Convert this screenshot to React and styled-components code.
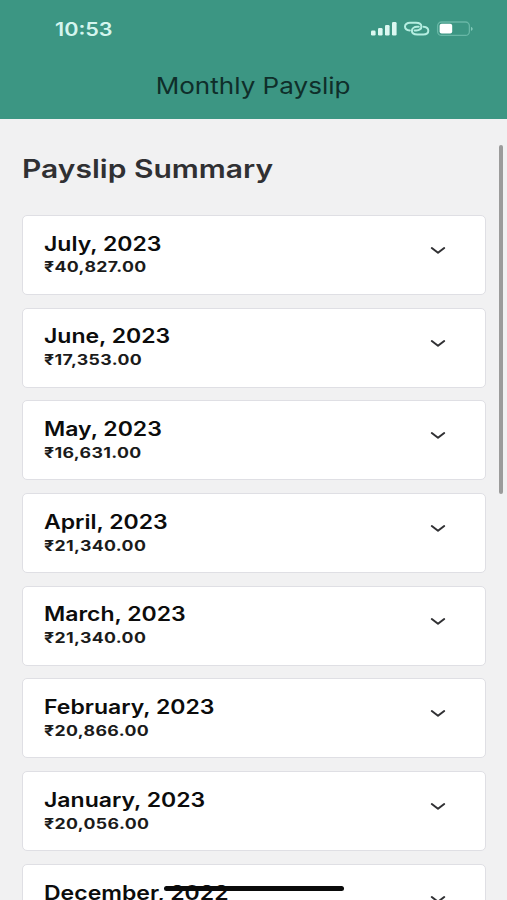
import styled, { createGlobalStyle } from "styled-components"

const payslips = [
  { month: "July, 2023", amount: "₹40,827.00" },
  { month: "June, 2023", amount: "₹17,353.00" },
  { month: "May, 2023", amount: "₹16,631.00" },
  { month: "April, 2023", amount: "₹21,340.00" },
  { month: "March, 2023", amount: "₹21,340.00" },
  { month: "February, 2023", amount: "₹20,866.00" },
  { month: "January, 2023", amount: "₹20,056.00" },
  { month: "December, 2022" }
]

const StatusIcons = () => (
  <svg width="103" height="20" viewBox="0 0 103 20" fill="none">
    <g fill="#dcf8f1">
      <rect x="1" y="10.6" width="4.6" height="5" rx="1.3" />
      <rect x="8" y="8" width="4.6" height="7.6" rx="1.3" />
      <rect x="15" y="5" width="4.6" height="10.6" rx="1.3" />
      <rect x="22" y="2" width="4.6" height="13.6" rx="1.3" />
    </g>
    <g stroke="#b5eee1" strokeWidth="2" strokeLinecap="round">
      <path d="M39.8 10.5C36.8 10.2 35 8.5 35 6.5C35 4.4 37 2.8 40 2.8H46C49.5 2.8 51.4 4.6 51.4 6.6C51.4 8.8 49.3 10.4 46.2 10.4H44.6" />
      <path d="M53.6 6.8C56.5 7.1 58.3 8.7 58.3 10.7C58.3 12.8 56.3 14.4 53.3 14.4H47.3C43.8 14.4 41.9 12.7 41.9 10.7C41.9 8.5 44 6.8 47.1 6.8H48.7" />
    </g>
    <rect x="67.6" y="2" width="31.8" height="13.4" rx="4" stroke="#68b7a6" strokeWidth="1.3" />
    <path d="M101 6.9C103.2 7.3 103.2 10.3 101 10.7Z" fill="#82c9b9" />
    <rect x="69.6" y="3.8" width="12.6" height="9.8" rx="2" fill="#fff" />
  </svg>
)

const Chevron = () => (
  <svg width="16" height="10" viewBox="0 0 16 10" fill="none">
    <path d="M1.8 2L8 6.8L14.2 2" stroke="#303033" strokeWidth="2" strokeLinecap="round" strokeLinejoin="round" />
  </svg>
)

const App = () => {
  return (
    <Screen>
      <GlobalStyle />
      <Header>
        <StatusBar>
          <Time>10:53</Time>
          <StatusIcons />
        </StatusBar>
        <Title $stretch={1.158}>Monthly Payslip</Title>
      </Header>
      <Content>
        <Heading>Payslip Summary</Heading>
        <PayslipList>
          {payslips.map((payslip) => (
            <PayslipCard key={payslip.month}>
              <div>
                <Month $stretch={1.18}>{payslip.month}</Month>
                {payslip.amount && <Amount $stretch={1.238}>{payslip.amount}</Amount>}
              </div>
              <ExpandButton aria-label="Expand">
                <Chevron />
              </ExpandButton>
            </PayslipCard>
          ))}
        </PayslipList>
      </Content>
      <ScrollThumb />
      <HomeIndicator />
    </Screen>
  )
}

export default App

const GlobalStyle = createGlobalStyle`
  * {
    box-sizing: border-box;
  }

  body {
    margin: 0;
    font-family: Inter, "Liberation Sans", sans-serif;
  }
`

const Screen = styled.div`
  position: relative;
  height: 900px;
  overflow: hidden;
  background: #f1f1f2;
`

const Header = styled.header`
  height: 119px;
  padding-top: 18.5px;
  background: #3c9683;
`

const StatusBar = styled.div`
  display: flex;
  align-items: center;
  justify-content: space-between;
  height: 22px;
  padding: 0 34px 0 55px;
`

/* the type is wider than the font's own set width */
const WideText = styled.div`
  width: max-content;
  white-space: nowrap;
  transform: scaleX(${(props) => props.$stretch || 1.2});
  transform-origin: left;
`

const Time = styled(WideText)`
  font-size: 18px;
  line-height: 22px;
  font-weight: 600;
  color: #d5f5ee;
`

const Title = styled(WideText)`
  margin: 31px auto 0;
  font-size: 22.5px;
  line-height: 28px;
  color: #0f2e2a;
  transform-origin: center;
`

const Content = styled.main`
  padding: 33.5px 21px 0 22px;
`

const Heading = styled(WideText).attrs({ as: "h1" })`
  margin: 0;
  font-size: 25px;
  line-height: 32px;
  font-weight: 600;
  color: #303033;
`

const PayslipList = styled.div`
  display: flex;
  flex-direction: column;
  gap: 12.7px;
  margin-top: 30.5px;
`

const PayslipCard = styled.div`
  display: flex;
  justify-content: space-between;
  height: 80px;
  padding: 15.7px 39px 0 21.4px;
  background: #fff;
  border: 1px solid #dfdfe4;
  border-radius: 5px;
`

const Month = styled(WideText)`
  font-size: 19.5px;
  line-height: 24px;
  font-weight: 600;
  color: #0c0c0c;
`

const Amount = styled(WideText)`
  margin-top: 1.8px;
  font-size: 14.3px;
  line-height: 20px;
  font-weight: 700;
  letter-spacing: 0.3px;
  color: #1b1b1b;
`

const ExpandButton = styled.button`
  align-self: flex-start;
  display: flex;
  margin-top: 14.3px;
  padding: 0;
  background: none;
  border: none;
`

const ScrollThumb = styled.div`
  position: absolute;
  top: 145px;
  right: 4px;
  width: 4px;
  height: 349px;
  border-radius: 2px;
  background: #9b9b9b;
`

const HomeIndicator = styled.div`
  position: absolute;
  top: 886px;
  left: 164px;
  width: 180px;
  height: 5px;
  border-radius: 3px;
  background: #0a0a0a;
`
